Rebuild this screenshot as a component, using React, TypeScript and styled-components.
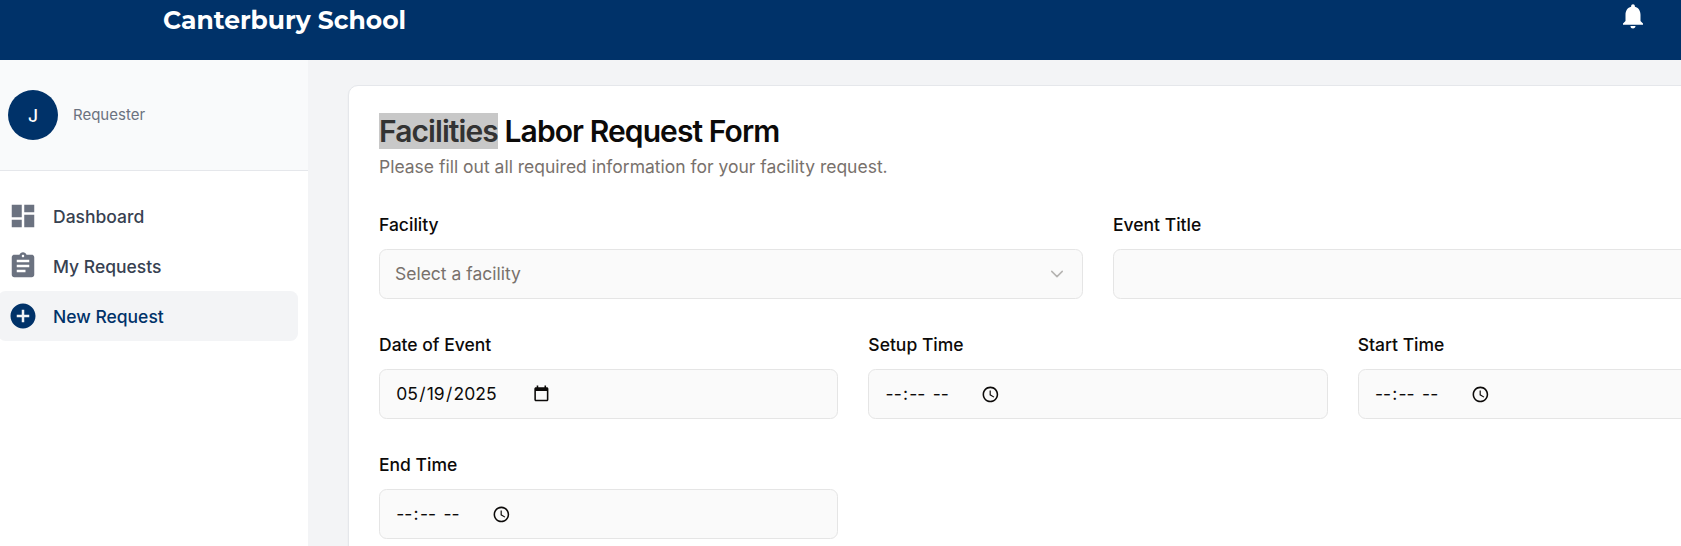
import React from "react";
import styled, { createGlobalStyle } from "styled-components";
import { MdAddCircle, MdAssignment, MdDashboard, MdNotifications } from "react-icons/md";

const GlobalStyle = createGlobalStyle`
  *, *::before, *::after { box-sizing: border-box; }
  html, body { margin: 0; padding: 0; }
  body {
    font-family: Inter, "Liberation Sans", sans-serif;
    font-size: 17.5px;
    line-height: 25px;
    color: #0c0a09;
    background: #f3f4f6;
    overflow: hidden;
  }
`;

const Page = styled.div`
  display: flex;
  flex-direction: column;
  width: 100%;
  height: 546px;
  overflow: hidden;
`;

const TopBar = styled.header`
  display: flex;
  flex: none;
  justify-content: space-between;
  height: 60px;
  padding: 0 33px 0 163px;
  background: #003269;
  color: #fff;
`;

const Brand = styled.h1`
  margin: 0;
  padding-top: 5px;
  font-family: Montserrat, Inter, sans-serif;
  font-size: 25px;
  line-height: 30px;
  font-weight: 700;
  white-space: nowrap;
`;

const BellButton = styled.div`
  display: flex;
  height: 30px;
  margin-top: 1px;
`;

const Body = styled.div`
  display: flex;
  flex: 1;
  min-height: 0;
`;

const Sidebar = styled.aside`
  flex: none;
  width: 308px;
  background: #fff;
`;

const Profile = styled.div`
  display: flex;
  align-items: center;
  gap: 15px;
  height: 111px;
  padding-left: 8px;
  background: #f9fafb;
  border-bottom: 1px solid #e5e7eb;
`;

const Avatar = styled.div`
  display: flex;
  align-items: center;
  justify-content: center;
  width: 50px;
  height: 50px;
  padding-top: 1px;
  border-radius: 50%;
  background: #003269;
  color: #fff;
  font-weight: 500;
`;

const Role = styled.span`
  font-size: 15px;
  line-height: 20px;
  color: #6b7280;
`;

const Nav = styled.nav`
  display: flex;
  flex-direction: column;
  padding: 20px 10px 0 0;
`;

const NavItem = styled.a<{ $active?: boolean }>`
  display: flex;
  align-items: center;
  gap: 15px;
  height: 50px;
  margin-left: -2px;
  padding-left: 10px;
  border-radius: 7.5px;
  font-weight: 500;
  color: ${(p) => (p.$active ? "#003269" : "#374151")};
  background: ${(p) => (p.$active ? "#f3f4f6" : "transparent")};

  svg {
    color: ${(p) => (p.$active ? "#003269" : "#6b7280")};
  }
`;

const Main = styled.main`
  flex: 1;
  min-width: 0;
  padding: 25px 0 0 40px;
  overflow: hidden;
`;

const Card = styled.section`
  width: 1500px;
  height: 700px;
  padding: 27px 30px;
  background: #fff;
  border: 1px solid #e5e7eb;
  border-radius: 10px;
  box-shadow: 0 1px 2px rgba(0, 0, 0, 0.05);
`;

const Title = styled.h2`
  margin: 0;
  font-size: 30px;
  line-height: 36px;
  font-weight: 600;
  letter-spacing: -0.91px;
`;

const Selected = styled.span`
  display: inline-block;
  height: 36px;
  background: #c8c8c8;
  color: #333;
`;

const Description = styled.p`
  margin: 5px 0 0;
  color: #78716c;
`;

const Form = styled.form`
  display: flex;
  flex-direction: column;
  gap: 30px;
  margin-top: 30px;
`;

const Row = styled.div<{ $columns: number }>`
  display: grid;
  grid-template-columns: repeat(${(p) => p.$columns}, 1fr);
  gap: 30px;
`;

const Field = styled.div`
  display: flex;
  flex-direction: column;
  gap: 10px;
  height: 90px;
`;

const Label = styled.label`
  height: 30px;
  padding-top: 1px;
  line-height: 30px;
  font-weight: 500;
`;

const Control = styled.div`
  display: flex;
  align-items: center;
  height: 50px;
  padding: 0 16px 0 15px;
  border: 1px solid #e5e5e5;
  border-radius: 7.5px;
  background: #fafafa;
`;

const Placeholder = styled.span`
  padding-bottom: 2px;
  color: #78716c;
`;

const Chevron = styled.svg`
  margin-left: auto;
  color: #b5b3b1;
`;

const Segments = styled.span<{ $width: number }>`
  display: flex;
  gap: 1.25px;
  width: ${(p) => p.$width}px;
  padding: 0 0 2px 1.25px;
  white-space: pre;
`;

const PickerIcon = styled.svg`
  flex: none;
  width: 18.75px;
  height: 18.75px;
  fill: #0c0a09;
`;

const CalendarIcon = styled(PickerIcon)`
  margin-bottom: 2px;
`;

const TimeField = ({ label }: { label: string }) => (
  <Field>
    <Label>{label}</Label>
    <Control>
      <Segments $width={97}>
        <span>--</span>
        <span>:</span>
        <span>--</span>
        <span> </span>
        <span>--</span>
      </Segments>
      <PickerIcon viewBox="0 0 24 24">
        <path d="M11.99 2C6.47 2 2 6.48 2 12s4.47 10 9.99 10C17.52 22 22 17.52 22 12S17.52 2 11.99 2zM12 20c-4.42 0-8-3.58-8-8s3.58-8 8-8 8 3.58 8 8-3.58 8-8 8z" />
        <path d="M12.5 7H11v6l5.25 3.15.75-1.23-4.5-2.67z" />
      </PickerIcon>
    </Control>
  </Field>
);

export default function App() {
  return (
    <>
      <GlobalStyle />
      <Page>
        <TopBar>
          <Brand>Canterbury School</Brand>
          <BellButton>
            <MdNotifications size={30} />
          </BellButton>
        </TopBar>
        <Body>
          <Sidebar>
            <Profile>
              <Avatar>J</Avatar>
              <Role>Requester</Role>
            </Profile>
            <Nav>
              <NavItem>
                <MdDashboard size={30} />
                Dashboard
              </NavItem>
              <NavItem>
                <MdAssignment size={30} />
                My Requests
              </NavItem>
              <NavItem $active>
                <MdAddCircle size={30} />
                New Request
              </NavItem>
            </Nav>
          </Sidebar>
          <Main>
            <Card>
              <Title>
                <Selected>Facilities</Selected> Labor Request Form
              </Title>
              <Description>Please fill out all required information for your facility request.</Description>
              <Form>
                <Row $columns={2}>
                  <Field>
                    <Label>Facility</Label>
                    <Control>
                      <Placeholder>Select a facility</Placeholder>
                      <Chevron width="18" height="18" viewBox="0 0 24 24" fill="none" stroke="currentColor" strokeWidth="2" strokeLinecap="round" strokeLinejoin="round">
                        <path d="m5 8.5 7 7 7-7" />
                      </Chevron>
                    </Control>
                  </Field>
                  <Field>
                    <Label>Event Title</Label>
                    <Control />
                  </Field>
                </Row>
                <Row $columns={3}>
                  <Field>
                    <Label>Date of Event</Label>
                    <Control>
                      <Segments $width={136.5}>
                        <span>05</span>
                        <span>/</span>
                        <span>19</span>
                        <span>/</span>
                        <span>2025</span>
                      </Segments>
                      <CalendarIcon viewBox="0 0 24 24">
                        <path d="M19 4h-1V2h-2v2H8V2H6v2H5c-1.1 0-2 .9-2 2v14c0 1.1.9 2 2 2h14c1.1 0 2-.9 2-2V6c0-1.1-.9-2-2-2zm0 16H5V9h14v11z" />
                      </CalendarIcon>
                    </Control>
                  </Field>
                  <TimeField label="Setup Time" />
                  <TimeField label="Start Time" />
                  <TimeField label="End Time" />
                </Row>
              </Form>
            </Card>
          </Main>
        </Body>
      </Page>
    </>
  );
}
